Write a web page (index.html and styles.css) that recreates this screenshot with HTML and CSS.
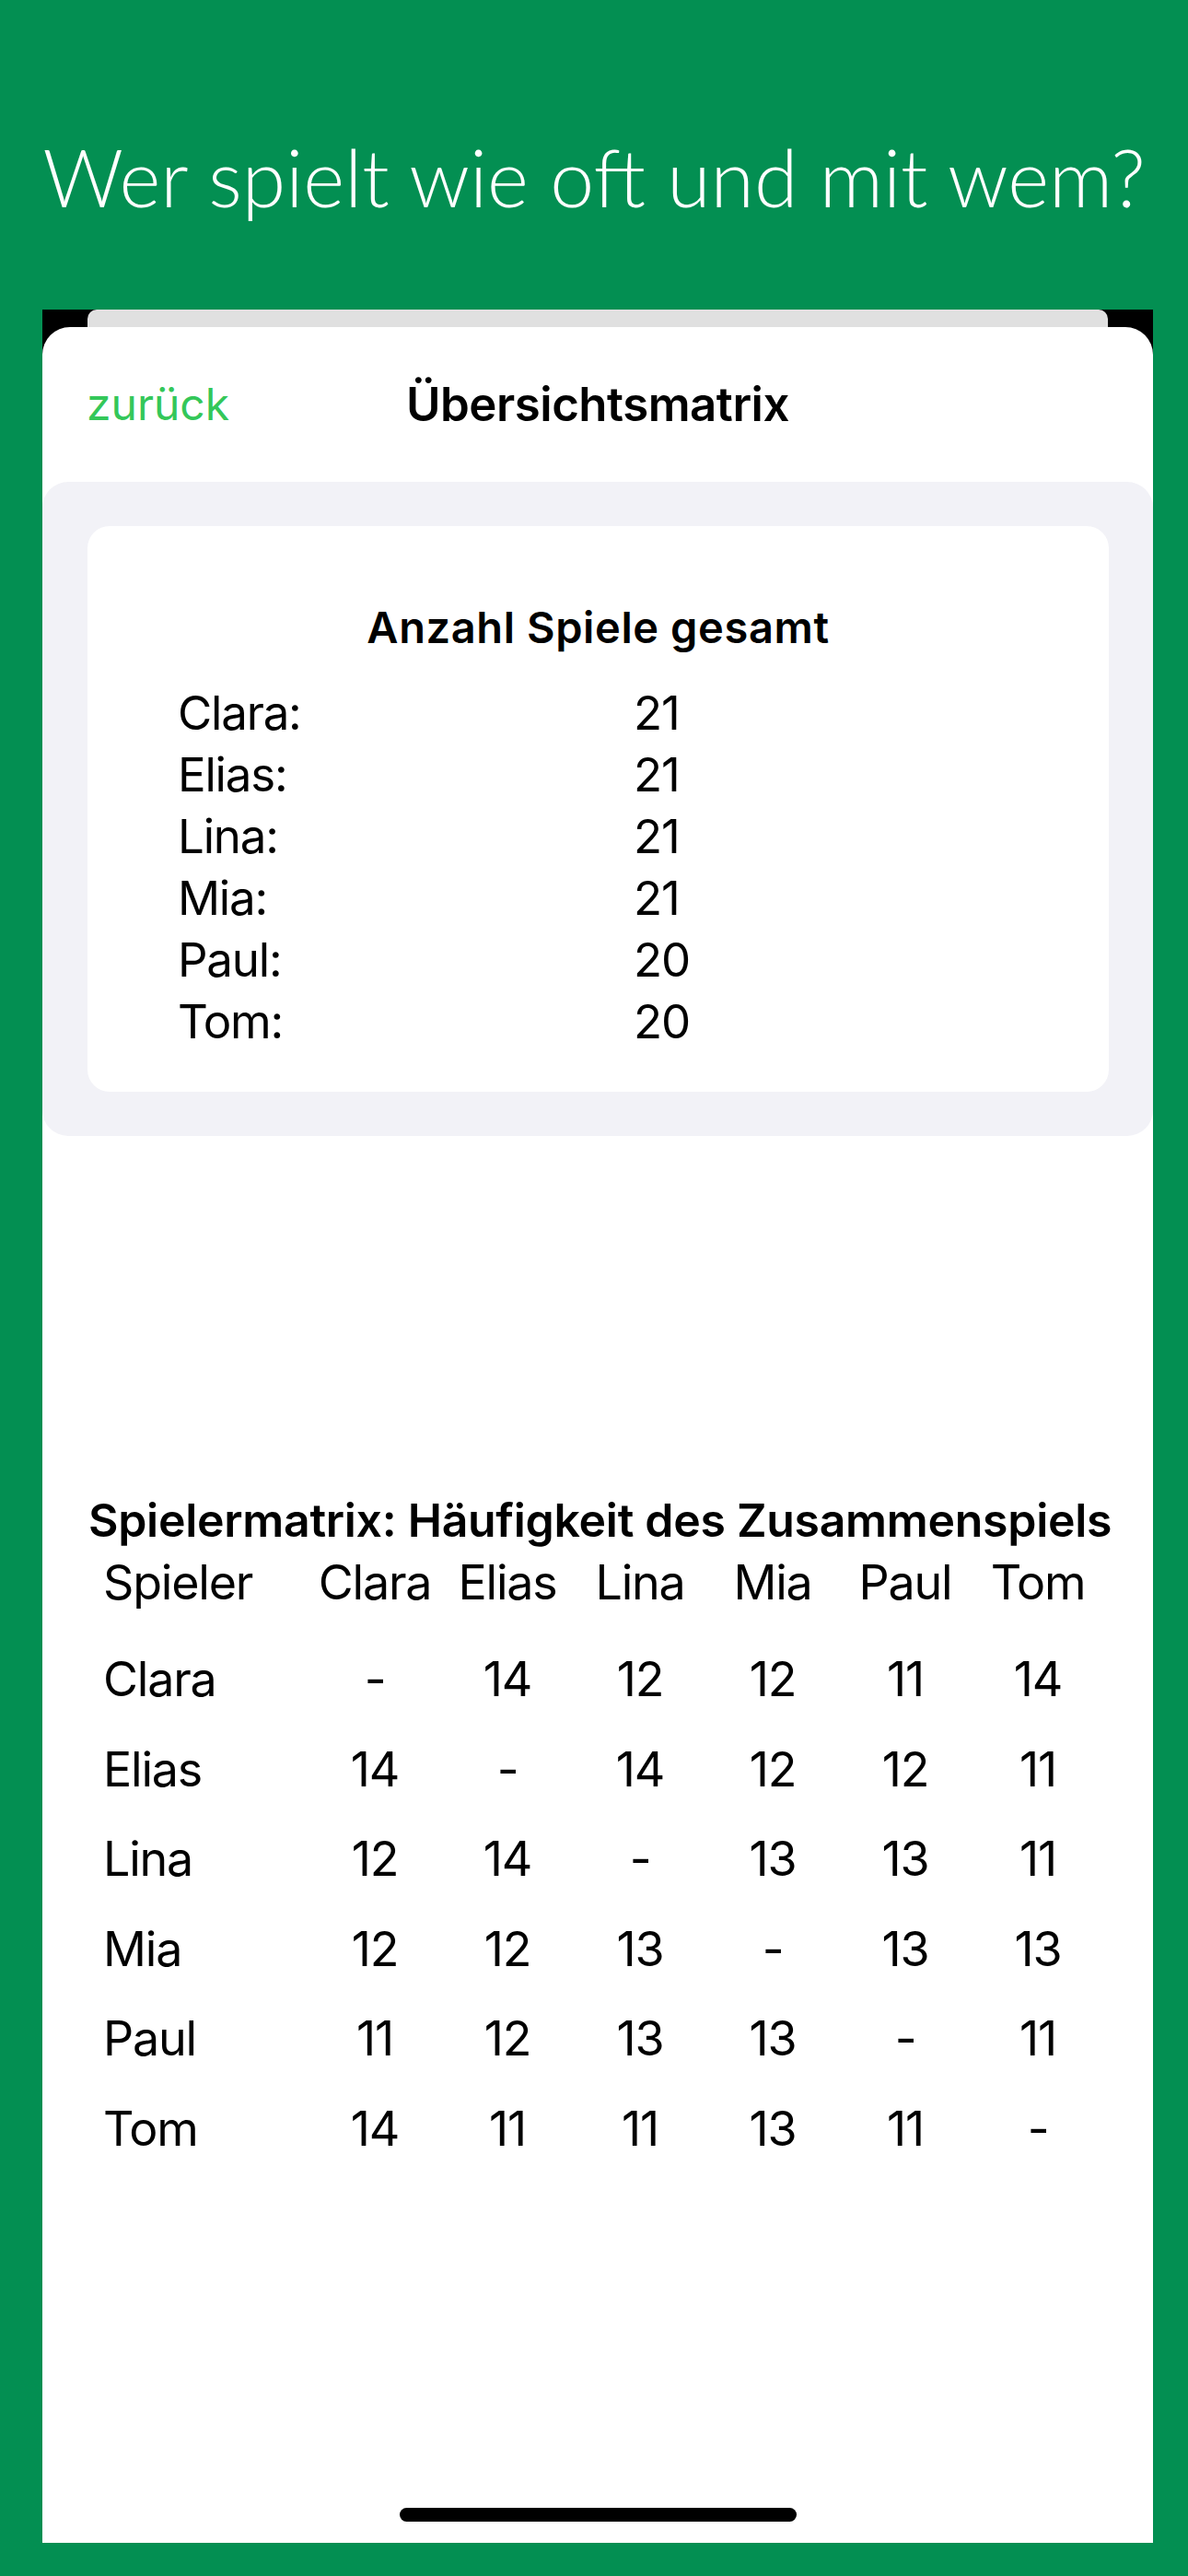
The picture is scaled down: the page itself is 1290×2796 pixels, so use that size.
FILE: index.html
```html
<!DOCTYPE html>
<html lang="de">
<head>
  <meta charset="UTF-8" />
  <title>Übersichtsmatrix</title>
  <link rel="stylesheet" href="styles.css">
</head>
<body>
  <header class="banner">
    <h1>Wer spielt wie oft und mit wem?</h1>
  </header>

  <div class="device">
    <div class="sheet-behind"></div>
    <div class="sheet">
      <nav class="navbar">
        <a class="back">zurück</a>
        <h2 class="nav-title">Übersichtsmatrix</h2>
        <span></span>
      </nav>

      <section class="summary">
        <div class="summary-card">
          <h3>Anzahl Spiele gesamt</h3>
          <div class="totals">
            <span>Clara:</span><span>21</span>
            <span>Elias:</span><span>21</span>
            <span>Lina:</span><span>21</span>
            <span>Mia:</span><span>21</span>
            <span>Paul:</span><span>20</span>
            <span>Tom:</span><span>20</span>
          </div>
        </div>
      </section>

      <section class="matrix">
        <h3>Spielermatrix: Häufigkeit des Zusammenspiels</h3>
        <div class="matrix-grid head">
          <span class="name">Spieler</span>
          <span>Clara</span><span>Elias</span><span>Lina</span><span>Mia</span><span>Paul</span><span>Tom</span>
        </div>
        <div class="matrix-grid">
          <span class="name">Clara</span>
          <span>-</span><span>14</span><span>12</span><span>12</span><span>11</span><span>14</span>
          <span class="name">Elias</span>
          <span>14</span><span>-</span><span>14</span><span>12</span><span>12</span><span>11</span>
          <span class="name">Lina</span>
          <span>12</span><span>14</span><span>-</span><span>13</span><span>13</span><span>11</span>
          <span class="name">Mia</span>
          <span>12</span><span>12</span><span>13</span><span>-</span><span>13</span><span>13</span>
          <span class="name">Paul</span>
          <span>11</span><span>12</span><span>13</span><span>13</span><span>-</span><span>11</span>
          <span class="name">Tom</span>
          <span>14</span><span>11</span><span>11</span><span>13</span><span>11</span><span>-</span>
        </div>
      </section>

      <div class="home-indicator"></div>
    </div>
  </div>
</body>
</html>
```

FILE: styles.css
```css
body {
  margin: 0;
  width: 1290px;
  height: 2796px;
  background: #038f52;
  font-family: Inter, "Liberation Sans", sans-serif;
  color: #000;
  overflow: hidden;
}

/* green banner with the question */
.banner {
  box-sizing: border-box;
  height: 336px;
  padding-top: 140px;
  text-align: center;
}
.banner h1 {
  margin: 0;
  font-family: Lato, "Open Sans", sans-serif;
  font-weight: 300;
  font-size: 86px;
  line-height: normal;
  color: #fff;
  white-space: nowrap;
}

/* phone screen */
.device {
  margin-left: 46px;
  width: 1206px;
  height: 2424px;
  background: #000;
  display: flex;
  flex-direction: column;
  overflow: hidden;
}
.sheet-behind {
  flex: 0 0 19px;
  margin: 0 49px;
  background: #e0e0e0;
  border-radius: 10px 10px 0 0;
}
.sheet {
  flex: 1;
  background: #fff;
  border-radius: 30px 30px 0 0;
  display: flex;
  flex-direction: column;
}

.navbar {
  height: 168px;
  display: grid;
  grid-template-columns: 1fr auto 1fr;
  align-items: center;
  padding: 0 48px;
  font-size: 48px;
  line-height: 168px;
}
.back {
  color: #34c759;
}
.nav-title {
  margin: 0;
  font-size: 51px;
  font-weight: 600;
  letter-spacing: -0.5px;
}

/* totals card */
.summary {
  background: #f2f2f7;
  border-radius: 28px;
  padding: 48px 48px 48px 49px;
}
.summary-card {
  background: #fff;
  border-radius: 24px;
  padding: 85px 0 43px 98px;
}
.summary-card h3 {
  margin: 0 98px 34px 0;
  text-align: center;
  font-size: 47px;
  font-weight: 600;
  line-height: 50px;
  letter-spacing: 0.6px;
}
.totals {
  display: grid;
  grid-template-columns: 495px auto;
  font-size: 51px;
  line-height: 67px;
  letter-spacing: -1.2px;
}

/* who-with-whom matrix */
.matrix {
  margin-top: 387px;
  padding-left: 50px;
}
.matrix h3 {
  margin: 0;
  font-size: 50px;
  font-weight: 600;
  line-height: 60px;
  letter-spacing: -0.3px;
  white-space: nowrap;
}
.matrix-grid {
  margin-left: 16px;
  display: grid;
  grid-template-columns: 223px repeat(6, 144px);
  font-size: 52px;
  line-height: 97.5px;
  letter-spacing: -1.2px;
  text-align: center;
}
.matrix-grid.head {
  line-height: 76px;
  margin-bottom: 18px;
}
.matrix-grid .name {
  text-align: left;
}

.home-indicator {
  margin: auto auto 23px;
  width: 431px;
  height: 15px;
  border-radius: 8px;
  background: #000;
}
```
